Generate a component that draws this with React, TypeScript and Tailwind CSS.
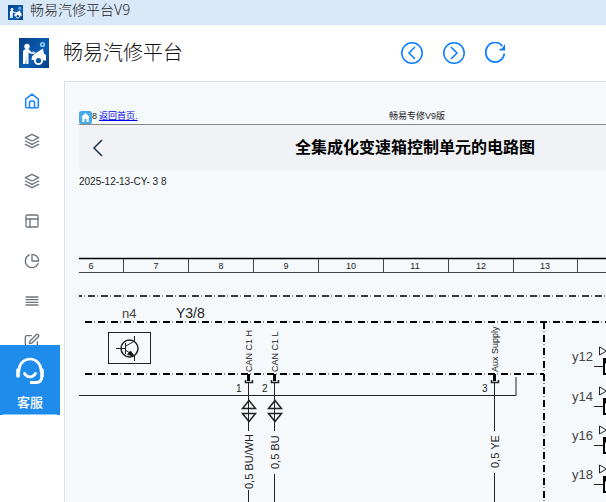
import { FiAlignJustify, FiEdit, FiLayers, FiLayout, FiPieChart } from "react-icons/fi";

const columns = [
  { label: "6", x: 91 },
  { label: "7", x: 156 },
  { label: "8", x: 221 },
  { label: "9", x: 286 },
  { label: "10", x: 351 },
  { label: "11", x: 415 },
  { label: "12", x: 481 },
  { label: "13", x: 545 },
];

const dividers = [123, 188, 253, 318, 383, 448, 513, 577];

const wires = [
  { pin: "1", x: 249, signal: "CAN C1 H", wire: "0,5 BU/WH", textEnd: 489, gapEnd: 490, twisted: true },
  { pin: "2", x: 275, signal: "CAN C1 L", wire: "0,5 BU", textEnd: 469, gapEnd: 474, twisted: true },
  { pin: "3", x: 495, signal: "Aux Supply", wire: "0,5 YE", textEnd: 468, gapEnd: 473, twisted: false },
];

const valves = [
  { label: "y12", y: 357 },
  { label: "y14", y: 397 },
  { label: "y16", y: 436 },
  { label: "y18", y: 475 },
];

const menu = [
  { name: "资料", Icon: FiLayers },
  { name: "分类", Icon: FiLayers },
  { name: "布局", Icon: FiLayout },
  { name: "统计", Icon: FiPieChart },
  { name: "列表", Icon: FiAlignJustify },
  { name: "编辑", Icon: FiEdit },
];

const Logo = ({ className }: { className: string }) => (
  <svg viewBox="0 0 30 30" className={className} aria-hidden="true">
    <defs>
      <linearGradient id="logoBg" x1="0" y1="0" x2="1" y2="1">
        <stop offset="0" stopColor="#063f86" />
        <stop offset="0.6" stopColor="#0a5fb4" />
        <stop offset="1" stopColor="#063d84" />
      </linearGradient>
    </defs>
    <rect width="30" height="30" fill="url(#logoBg)" />
    <circle cx="8" cy="8.500" r="2.700" fill="#fff" />
    <path d="M4 14c0-2 1.500-3 4-3 2 0 3 1 4 3l3 .5v1.500l-4-.5-1.500-1v11.500H7.200v-8l-.7 8H4z" fill="#fff" />
    <path d="M13 18.500l2.500-2.500 8.500-1 3 2v5.500h-2.500a5 5 0 0 0-9.500-.5h-2.500z" fill="#fff" />
    <path d="M13 12.500l4 2.500 7-4.500 1 5.500h-9z" fill="#fff" />
    <circle cx="19.500" cy="22.500" r="3.600" fill="#0755a6" stroke="#fff" strokeWidth="2" />
    <circle cx="23.500" cy="6.500" r="2.600" fill="#8fd0f8" />
    <circle cx="23.500" cy="6.500" r="1" fill="#0a5fb4" />
  </svg>
);

const CircleArrow = ({ d }: { d: string }) => (
  <svg viewBox="0 0 22 22" className="size-[22px]" fill="none" stroke="currentColor" strokeWidth="1.500">
    <circle cx="11" cy="11" r="10.200" />
    <path d={d} />
  </svg>
);

const TitleBar = () => (
  <div className="flex h-[25px] shrink-0 items-center gap-[7px] bg-[#d9e8f8] pl-2 font-['Noto_Sans','Noto_Sans_CJK_SC',sans-serif] text-[#222]">
    <Logo className="size-[15px]" />
    <span className="pb-1.5 text-sm font-light">畅易汽修平台V9</span>
  </div>
);

const Header = () => (
  <header className="flex h-14 shrink-0 items-center">
    <Logo className="ml-[19px] size-[30px] shrink-0" />
    <h1 className="ml-3.5 w-[338px] shrink-0 text-xl font-light text-[#111]">畅易汽修平台</h1>
    <nav className="flex gap-5 text-[#0a7cff]">
      <button type="button" aria-label="后退">
        <CircleArrow d="M14 5l-6 6 6 6" />
      </button>
      <button type="button" aria-label="前进">
        <CircleArrow d="M8 5l6 6-6 6" />
      </button>
      <button type="button" aria-label="刷新">
        <svg viewBox="0 0 22 22" className="size-[22px]" fill="none" stroke="currentColor" strokeWidth="1.800">
          <path d="M17.300 4.100A9.300 9.800 0 1 0 19.300 11.500" />
          <path d="M20 2v6.500h-5.500v-1.500l2.500-.5z" fill="currentColor" stroke="none" />
        </svg>
      </button>
    </nav>
  </header>
);

const Sidebar = () => (
  <aside className="relative w-16 shrink-0">
    <nav className="flex flex-col items-center gap-6 pt-3 text-[#6c757d]">
      <a href="#home" aria-label="首页" className="text-[#1b84ff]">
        <svg viewBox="0 0 16 16" className="size-4" fill="none" stroke="currentColor" strokeWidth="1.500" strokeLinejoin="round">
          <path d="M1.700 6.200L8 1.200l6.300 5v7.300a1.200 1.200 0 0 1-1.200 1.200H2.900a1.200 1.200 0 0 1-1.200-1.200z" />
          <path d="M5.500 14.500V9a1 1 0 0 1 1-1h3a1 1 0 0 1 1 1v5.500" />
        </svg>
      </a>
      {menu.map(({ name, Icon }) => (
        <a key={name} href={`#${name}`} aria-label={name}>
          <Icon className="size-4" />
        </a>
      ))}
    </nav>
    {/* 客服 button floats over the menu */}
    <button
      type="button"
      className="absolute top-[264px] left-0 flex h-[70px] w-[60px] flex-col items-center bg-[#1f8ceb] pt-3 text-white"
    >
      <svg viewBox="0 0 28 28" className="size-7" fill="none" stroke="currentColor">
        <path d="M3 15v-2a11 11 0 0 1 22 0v2" strokeWidth="2.600" />
        <path d="M2 13v6M26 13v6" strokeWidth="3.600" strokeLinecap="round" />
        <path d="M26 19c0 5-3 6.500-6 6.500h-6" strokeWidth="2.800" />
        <path d="M8.500 16.500c3 4.500 8 4.500 11 0" strokeWidth="2.800" strokeLinecap="round" />
      </svg>
      <span className="mt-2.5 text-[13px] leading-4 font-medium">客服</span>
      <span className="mt-auto h-px w-[54px] bg-[#8ec5f6]" />
    </button>
  </aside>
);

// dash-dot line, the dots are fainter than the dashes
const DashDot = ({ d, color }: { d: string; color: string }) => (
  <g strokeWidth="2">
    <path d={d} stroke={color} strokeDasharray="7 6" />
    <path d={d} stroke="#8d9193" strokeDasharray="1 12" strokeDashoffset="-9" />
  </g>
);

const Circuit = () => (
  <svg
    viewBox="79 250 527 252"
    className="h-[252px] w-[527px] shrink-0 font-['Liberation_Sans',sans-serif]"
    fill="none"
    stroke="#222"
  >
    {/* column ruler */}
    <path d="M79 258.500H606" stroke="#000" strokeWidth="1.500" />
    <path d="M79 272.500H606" stroke="#444" />
    {dividers.map((x) => (
      <path key={x} d={`M${x + 0.5} 259V272`} stroke="#444" />
    ))}
    <g fill="#222" stroke="none" fontSize="9" textAnchor="middle">
      {columns.map((c) => (
        <text key={c.label} x={c.x} y="269">
          {c.label}
        </text>
      ))}
    </g>

    {/* unit outlines */}
    <DashDot d="M75 296H606" color="#3a3a3a" />
    <DashDot d="M85 322H606" color="#000" />
    <DashDot d="M85 374H544" color="#000" />
    <DashDot d="M544 322V502" color="#000" />

    <g fill="#222" stroke="none">
      <text x="122" y="318" fontSize="13" fill="#444">
        n4
      </text>
      <text x="176" y="318" fontSize="14">
        Y3/8
      </text>
    </g>

    {/* n4 transistor */}
    <rect x="108.500" y="332.500" width="42" height="31" />
    <circle cx="129.500" cy="348.500" r="8.500" strokeWidth="1.500" />
    <path d="M116 348.500H126M125.500 343V354M126 346L134.500 341V336M126 350.500L134.500 356V361" />
    <path d="M134 356l-6.500-1.500 3-3.500z" fill="#111" />

    <path d="M79 395.500H516V377" />
    {wires.map((w) => (
      <g key={w.pin}>
        <path d={`M${w.x - 0.5} 374V381`} stroke="#000" strokeWidth="3" />
        <path d={`M${w.x - 3.5} 380V382.500H${w.x + 3.5}V380`} strokeWidth="1.500" />
        <path d={`M${w.x - 0.5} 382V431M${w.x - 0.5} ${w.gapEnd}V502`} />
        {w.twisted && (
          <path
            d={`M${w.x - 6.5} 408.500h13l-6.500-8zM${w.x - 6.5} 413.500h13l-6.500 8z`}
            strokeWidth="1.500"
          />
        )}
        <g fill="#222" stroke="none">
          <text x={w.x - 13} y="392" fontSize="10">
            {w.pin}
          </text>
          <text transform={`translate(${w.x + 3} 372) rotate(-90)`} fontSize="9">
            {w.signal}
          </text>
          <text transform={`translate(${w.x + 4} ${w.textEnd}) rotate(-90)`} fontSize="11">
            {w.wire}
          </text>
        </g>
      </g>
    ))}

    {valves.map((v) => (
      <g key={v.label}>
        <text x="572" y={v.y + 4} fill="#444" stroke="none" fontSize="13">
          {v.label}
        </text>
        <path d={`M599.500 ${v.y - 10}v8l7-4z`} />
        <path d={`M594 ${v.y + 9.5}h9`} />
        <path d={`M607 ${v.y + 2}h-3v15h3M604 ${v.y + 2}l3 5`} stroke="#000" strokeWidth="2" />
      </g>
    ))}
  </svg>
);

export default function App() {
  return (
    <div className="flex h-screen flex-col overflow-hidden bg-white font-['Liberation_Sans','Noto_Sans_CJK_SC',sans-serif]">
      <TitleBar />
      <Header />
      <div className="flex min-h-0 flex-1">
        <Sidebar />
        <main className="min-w-0 flex-1 overflow-hidden border-t border-l border-[#dce1e4] bg-[#f5f9fb] pt-7 pl-3.5">
          <div className="relative flex h-[15px] items-center border-b border-[#888] text-[9px] text-[#222]">
            <svg viewBox="0 0 13 13" className="size-[13px]" aria-hidden="true">
              <rect width="13" height="13" rx="2.500" fill="#45a9e6" />
              <path d="M6.500 2L2 6.300h1.300V11h2.200V8h2v3h2.200V6.300H11z" fill="#fff" />
            </svg>
            <span className="mr-0.5">8</span>
            <a href="#index" className="text-[#0000ee] underline">
              返回首页.
            </a>
            <span className="absolute left-[310px]">畅易专修V9版</span>
          </div>
          <div className="flex h-[45px] items-center bg-[#f1f2f6]">
            <button type="button" aria-label="返回" className="ml-3.5">
              <svg viewBox="0 0 10 18" className="h-[18px] w-2.5" fill="none" stroke="#12304f" strokeWidth="1.500">
                <path d="M9 1L1 9l8 8" />
              </svg>
            </button>
            <h2 className="ml-48 text-base font-bold whitespace-nowrap text-black">全集成化变速箱控制单元的电路图</h2>
          </div>
          <p className="pt-1 text-[10px] leading-4 text-[#222]">2025-12-13-CY- 3 8</p>
          <div className="pt-[60px]">
            <Circuit />
          </div>
        </main>
      </div>
    </div>
  );
}
